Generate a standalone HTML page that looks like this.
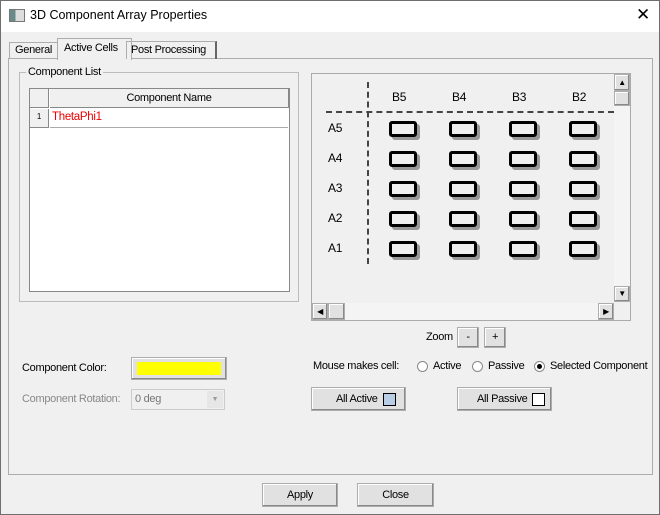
<html><head><style>
body{margin:0;width:660px;height:515px;background:#f0f0f0;font-family:"Liberation Sans",sans-serif;font-size:11px;letter-spacing:-0.3px;color:#000;position:relative;overflow:hidden}
.a{position:absolute}
.btn{position:absolute;background:#e1e1e1;border:1px solid #adadad;box-sizing:border-box;text-align:center;box-shadow:inset -1px -1px 0 #888,inset 1px 1px 0 #fff}
.rect{position:absolute;width:22px;height:10px;border:3px solid #000;border-radius:3px;box-shadow:3px 3px 0 #999;background:#f0f0f0}
.lbl{position:absolute;font-size:11px}
.rad{position:absolute;width:9px;height:9px;border:1px solid #888;border-radius:50%;background:#fff}
</style></head><body>
<div class="a" style="left:0;top:0;width:658px;height:513px;border:1px solid #6e6e6e"></div>
<div class="a" style="left:1px;top:1px;width:658px;height:31px;background:#fff"></div>
<div class="a" style="left:9px;top:9px;width:14px;height:11px;border:1px solid #777;background:linear-gradient(90deg,#6a8a8a 0 40%,#ddd 40%)"></div>
<div class="a" style="left:30px;top:8px;font-size:12.5px;letter-spacing:0">3D Component Array Properties</div>
<div class="a" style="left:636px;top:5px;font-size:17px">✕</div>
<div class="a" style="left:8px;top:58px;width:643px;height:415px;border:1px solid #adadad;background:#f0f0f0"></div>
<div class="a" style="left:9px;top:42px;width:47px;height:16px;border:1px solid #adadad;border-bottom:none;padding-left:5px;line-height:15px">General</div>
<div class="a" style="left:57px;top:38px;width:67px;height:21px;border:1px solid #adadad;border-bottom:none;background:#f0f0f0;padding-left:6px;line-height:18px">Active Cells</div>
<div class="a" style="left:126px;top:41px;width:84px;height:17px;border:1px solid #adadad;border-right:2px solid #666;border-bottom:none;padding-left:4px;line-height:17px">Post Processing</div>
<div class="a" style="left:19px;top:72px;width:278px;height:228px;border:1px solid #bbb"></div>
<div class="a" style="left:26px;top:66px;background:#f0f0f0;padding:0 2px">Component List</div>
<div class="a" style="left:29px;top:88px;width:259px;height:202px;border:1px solid #888;background:#fff"></div>
<div class="a" style="left:30px;top:89px;width:18px;height:18px;background:#f0f0f0;border-right:1px solid #888;border-bottom:1px solid #888"></div>
<div class="a" style="left:50px;top:89px;width:238px;height:18px;background:#f0f0f0;border-bottom:1px solid #888;border-right:1px solid #888;text-align:center;line-height:18px">Component Name</div>
<div class="a" style="left:30px;top:109px;width:18px;height:18px;background:#f0f0f0;border-right:1px solid #888;border-bottom:1px solid #888;font-size:8px;text-align:center;line-height:16px">1</div>
<div class="a" style="left:50px;top:127px;width:238px;height:1px;background:#aaa"></div>
<div class="a" style="left:52px;top:111px;color:#e00;font-size:11.5px">ThetaPhi1</div>
<div class="a" style="left:311px;top:73px;width:320px;height:248px;border:1px solid #aaa;box-sizing:border-box;background:#f0f0f0"></div>
<div class="a" style="left:367px;top:82px;width:0;height:182px;border-left:2px dashed #444"></div>
<div class="a" style="left:326px;top:111px;width:288px;height:0;border-top:2px dashed #444"></div>
<div class="lbl" style="left:392px;top:90px;font-size:12px">B5</div><div class="lbl" style="left:452px;top:90px;font-size:12px">B4</div><div class="lbl" style="left:512px;top:90px;font-size:12px">B3</div><div class="lbl" style="left:572px;top:90px;font-size:12px">B2</div>
<div class="lbl" style="left:328px;top:121px;font-size:12px">A5</div><div class="lbl" style="left:328px;top:151px;font-size:12px">A4</div><div class="lbl" style="left:328px;top:181px;font-size:12px">A3</div><div class="lbl" style="left:328px;top:211px;font-size:12px">A2</div><div class="lbl" style="left:328px;top:241px;font-size:12px">A1</div>
<div id="g"></div>
<script>
var s='';for(var r=0;r<5;r++)for(var c=0;c<4;c++)s+='<div class="rect" style="left:'+(389+c*60)+'px;top:'+(121+r*30)+'px"></div>';document.getElementById('g').innerHTML=s;
</script>
<div class="a" style="left:614px;top:74px;width:16px;height:228px;background:#f4f4f4"></div>
<div class="btn" style="left:614px;top:74px;width:16px;height:17px;font-size:8px;line-height:15px">▲</div>
<div class="btn" style="left:614px;top:91px;width:16px;height:15px"></div>
<div class="btn" style="left:614px;top:286px;width:16px;height:16px;font-size:8px;line-height:14px">▼</div>
<div class="a" style="left:312px;top:303px;width:302px;height:17px;background:#f4f4f4"></div>
<div class="btn" style="left:312px;top:303px;width:16px;height:17px;font-size:8px;line-height:15px">◀</div>
<div class="btn" style="left:328px;top:303px;width:17px;height:17px"></div>
<div class="btn" style="left:598px;top:303px;width:16px;height:17px;font-size:8px;line-height:15px">▶</div>
<div class="lbl" style="left:426px;top:331px">Zoom</div>
<div class="btn" style="left:457px;top:327px;width:22px;height:21px;line-height:19px">-</div>
<div class="btn" style="left:484px;top:327px;width:22px;height:21px;line-height:19px">+</div>
<div class="lbl" style="left:22px;top:362px">Component Color:</div>
<div class="btn" style="left:131px;top:357px;width:96px;height:23px"></div>
<div class="a" style="left:137px;top:362px;width:84px;height:13px;background:#ff0"></div>
<div class="lbl" style="left:22px;top:393px;color:#888">Component Rotation:</div>
<div class="a" style="left:131px;top:389px;width:94px;height:21px;border:1px solid #ccc;box-sizing:border-box;color:#777;padding-left:3px;line-height:19px">0 deg</div>
<div class="a" style="left:207px;top:391px;width:16px;height:17px;background:#e6e6e6;color:#999;font-size:7px;text-align:center;line-height:17px">▼</div>
<div class="lbl" style="left:313px;top:360px">Mouse makes cell:</div>
<div class="rad" style="left:417px;top:361px"></div><div class="lbl" style="left:433px;top:360px">Active</div>
<div class="rad" style="left:472px;top:361px"></div><div class="lbl" style="left:488px;top:360px">Passive</div>
<div class="rad" style="left:534px;top:361px"></div><div class="a" style="left:537px;top:364px;width:5px;height:5px;border-radius:50%;background:#000"></div><div class="lbl" style="left:550px;top:360px">Selected Component</div>
<div class="btn" style="left:311px;top:387px;width:95px;height:24px"></div>
<div class="lbl" style="left:336px;top:393px">All Active</div>
<div class="a" style="left:383px;top:393px;width:11px;height:11px;border:1px solid #000;background:#b9cde5"></div>
<div class="btn" style="left:457px;top:387px;width:95px;height:24px"></div>
<div class="lbl" style="left:477px;top:393px">All Passive</div>
<div class="a" style="left:532px;top:393px;width:11px;height:11px;border:1px solid #000;background:#fff"></div>
<div class="btn" style="left:262px;top:483px;width:76px;height:24px;line-height:22px">Apply</div>
<div class="btn" style="left:357px;top:483px;width:77px;height:24px;line-height:22px">Close</div>
</body></html>
